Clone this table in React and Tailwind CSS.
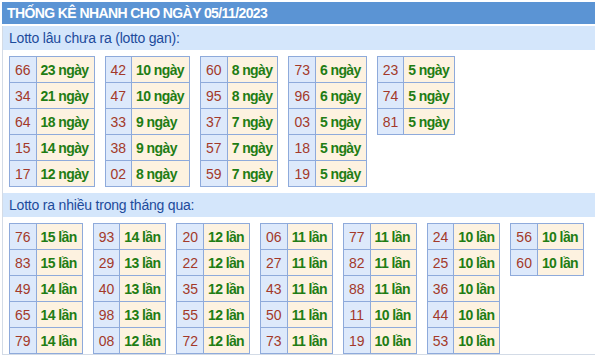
import React from "react";

const gan = [
  [["66", "23"], ["34", "21"], ["64", "18"], ["15", "14"], ["17", "12"]],
  [["42", "10"], ["47", "10"], ["33", "9"], ["38", "9"], ["02", "8"]],
  [["60", "8"], ["95", "8"], ["37", "7"], ["57", "7"], ["59", "7"]],
  [["73", "6"], ["96", "6"], ["03", "5"], ["18", "5"], ["19", "5"]],
  [["23", "5"], ["74", "5"], ["81", "5"]],
];

const nhieu = [
  [["76", "15"], ["83", "15"], ["49", "14"], ["65", "14"], ["79", "14"]],
  [["93", "14"], ["29", "13"], ["40", "13"], ["98", "13"], ["08", "12"]],
  [["20", "12"], ["22", "12"], ["35", "12"], ["55", "12"], ["72", "12"]],
  [["06", "11"], ["27", "11"], ["43", "11"], ["50", "11"], ["73", "11"]],
  [["77", "11"], ["82", "11"], ["88", "11"], ["11", "10"], ["19", "10"]],
  [["24", "10"], ["25", "10"], ["36", "10"], ["44", "10"], ["53", "10"]],
  [["56", "10"], ["60", "10"]],
];

function NumTable({ rows, unit }) {
  return (
    <table className="border-collapse border border-[#8eaadb] text-[14px] leading-[16px]">
      <tbody>
        {rows.map(([n, v], i) => (
          <tr key={i} className="h-[26px]">
            <td className="border border-[#8eaadb] bg-[#dde9fb] px-[5px] py-0 text-center text-[#a3392a]">
              {n}
            </td>
            <td className="border border-[#8eaadb] bg-[#fdf2e0] pl-[4px] pr-[5px] py-0 font-bold tracking-[-0.6px] text-[#1f7d14] whitespace-nowrap">
              {v} {unit}
            </td>
          </tr>
        ))}
      </tbody>
    </table>
  );
}

export default function App() {
  return (
    <div
      className="w-[595px] h-[358px] bg-white pt-[2px] pl-[2px] overflow-hidden"
      style={{ fontFamily: '"Liberation Sans", Arial, sans-serif' }}
    >
      <div className="h-[22px] bg-[#5b94d4] pl-[5px] flex items-center text-white font-bold text-[14px] tracking-[-0.6px]">
        THỐNG KÊ NHANH CHO NGÀY 05/11/2023
      </div>
      <div className="mt-[2px] border-l border-b border-[#d3dbe6]">
        <div className="h-[24px] bg-[#d4e6fb] pl-[6px] flex items-center text-[14px] tracking-[-0.2px] text-[#1d4b9b]">
          Lotto lâu chưa ra (lotto gan):
        </div>
        <div className="flex items-start gap-x-[10px] pl-[6px] pt-[6px]">
          {gan.map((t, i) => (
            <NumTable key={i} rows={t} unit="ngày" />
          ))}
        </div>
        <div className="mt-[6px] h-[24px] bg-[#d4e6fb] pl-[6px] flex items-center text-[14px] tracking-[-0.2px] text-[#1d4b9b]">
          Lotto ra nhiều trong tháng qua:
        </div>
        <div className="flex items-start gap-x-[10px] pl-[6px] pt-[6px]">
          {nhieu.map((t, i) => (
            <NumTable key={i} rows={t} unit="lần" />
          ))}
        </div>
      </div>
    </div>
  );
}
